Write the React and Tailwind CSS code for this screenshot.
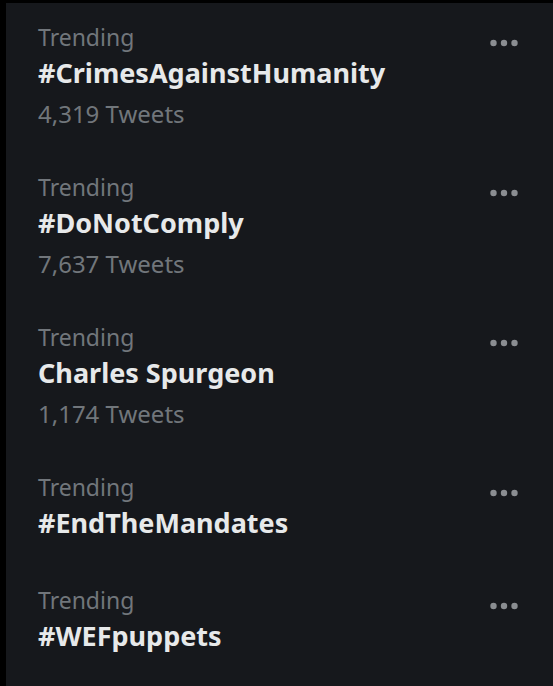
const TRENDS = [
  { title: '#CrimesAgainstHumanity', count: '4,319 Tweets' },
  { title: '#DoNotComply', count: '7,637 Tweets' },
  { title: 'Charles Spurgeon', count: '1,174 Tweets' },
  { title: '#EndTheMandates' },
  { title: '#WEFpuppets' },
]

export default function App() {
  return (
    <div
      className="h-[686px] w-[553px] bg-black pt-[3px] pl-[6px] overflow-hidden"
      style={{ fontFamily: '"Noto Sans", "Open Sans", sans-serif' }}
    >
      <div className="h-full bg-[#16181c]">
        {TRENDS.map((t) => (
          <TrendRow key={t.title} {...t} />
        ))}
      </div>
    </div>
  )
}

function TrendRow({ title, count }) {
  return (
    <div className="flex items-start justify-between pl-[32px] pr-[35px] pt-[16px] pb-[25px]">
      <div className="flex flex-col">
        <span className="h-[36px] text-[23px] leading-[36px] text-[#71767b]">Trending</span>
        <span className="h-[36px] text-[27px] leading-[36px] font-bold text-[#e7e9ea]">{title}</span>
        {count && (
          <span className="h-[37px] pt-[8px] text-[24px] leading-[29px] text-[#71767b]">{count}</span>
        )}
      </div>
      <svg width="28" height="8" viewBox="0 0 28 8" className="mt-[20px]" fill="#8a8d91">
        <circle cx="3.5" cy="4" r="3.2" />
        <circle cx="14" cy="4" r="3.2" />
        <circle cx="24.5" cy="4" r="3.2" />
      </svg>
    </div>
  )
}
